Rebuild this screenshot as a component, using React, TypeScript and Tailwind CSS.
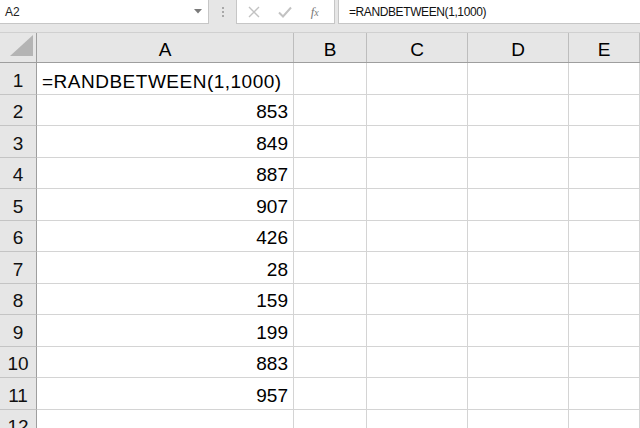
import * as React from "react";

// Worksheet with a RANDBETWEEN formula filled down column A
const values: (string | null)[] = [
  null,
  "853",
  "849",
  "887",
  "907",
  "426",
  "28",
  "159",
  "199",
  "883",
  "957",
  null,
];

const columns = ["A", "B", "C", "D", "E"];
const colWidths = ["w-[257px]", "w-[73px]", "w-[101px]", "w-[101px]", "flex-1"];

function FormulaBar() {
  return (
    <div className="flex h-[24px] items-stretch bg-[#e6e6e6]">
      <div className="flex w-[209px] items-center justify-between border-r border-b border-[#c6c6c6] bg-white pl-[5px] pr-[6px]">
        <span className="text-[12px] text-[#222]">A2</span>
        <svg width="8" height="5" viewBox="0 0 8 5">
          <path d="M0 0 H8 L4 4.5 Z" fill="#7a7a7a" />
        </svg>
      </div>
      <div className="flex w-[27px] flex-col items-center justify-center gap-[2px]">
        <span className="h-[2px] w-[2px] bg-[#a8a8a8]" />
        <span className="h-[2px] w-[2px] bg-[#a8a8a8]" />
        <span className="h-[2px] w-[2px] bg-[#a8a8a8]" />
      </div>
      <div className="flex w-[99px] items-center justify-around border border-t-0 border-[#c6c6c6] bg-white pl-[2px] pr-[6px]">
        <svg width="12" height="12" viewBox="0 0 12 12">
          <path d="M1 1 L11 11 M11 1 L1 11" stroke="#c2c2c2" strokeWidth="1.4" />
        </svg>
        <svg width="14" height="12" viewBox="0 0 14 12">
          <path d="M1 6.5 L5 10.5 L13 1.5" stroke="#c2c2c2" strokeWidth="2" fill="none" />
        </svg>
        <span className="font-['Liberation_Serif',serif] text-[13px] italic text-[#7a7a7a]">
          f<span className="text-[10px]">x</span>
        </span>
      </div>
      <div className="ml-[3px] flex flex-1 items-center border-b border-l border-[#c6c6c6] bg-white pl-[10px]">
        <span className="text-[12px] tracking-[-0.4px] text-[#111]">=RANDBETWEEN(1,1000)</span>
      </div>
    </div>
  );
}

function HeaderRow() {
  return (
    <div className="flex h-[30px] border-b border-[#9e9e9e] bg-[#e6e6e6]">
      <div className="relative w-[37px] border-r border-[#9e9e9e]">
        <svg className="absolute right-[3px] bottom-[6px]" width="23" height="21" viewBox="0 0 23 21">
          <path d="M23 0 V21 H0 Z" fill="#b4b4b4" />
        </svg>
      </div>
      {columns.map((c, i) => (
        <div
          key={c}
          className={`${colWidths[i]} flex items-center justify-center border-r border-[#bdbdbd] pt-[3px]`}
        >
          {c}
        </div>
      ))}
    </div>
  );
}

export default function App() {
  return (
    <div className="h-[428px] w-[640px] overflow-hidden bg-[#e6e6e6] font-['Liberation_Sans',Arial,sans-serif]">
      <FormulaBar />
      <div className="h-[9px] border-b border-[#d0d0d0]" />
      <div className="text-[19px] leading-none text-black">
        <HeaderRow />
        {values.map((v, r) => (
          <div key={r} className={`flex ${r % 2 === 0 ? "h-[32px]" : "h-[31px]"} bg-white`}>
            <div className="flex w-[37px] items-center justify-center border-r border-b border-r-[#9e9e9e] border-b-[#c4c4c4] bg-[#e6e6e6] pt-[3px] text-[#111]">
              {r + 1}
            </div>
            {columns.map((c, i) => (
              <div
                key={c}
                className={`${colWidths[i]} flex items-center border-r border-b border-[#d4d4d4] pt-[3px] ${
                  i === 0 && r > 0 ? "justify-end pr-[5px]" : "pl-[5px]"
                }`}
              >
                {i === 0 ? (
                  r === 0 ? (
                    <span className="pt-[2px] tracking-[0.5px]">=RANDBETWEEN(1,1000)</span>
                  ) : (
                    v
                  )
                ) : null}
              </div>
            ))}
          </div>
        ))}
      </div>
    </div>
  );
}
